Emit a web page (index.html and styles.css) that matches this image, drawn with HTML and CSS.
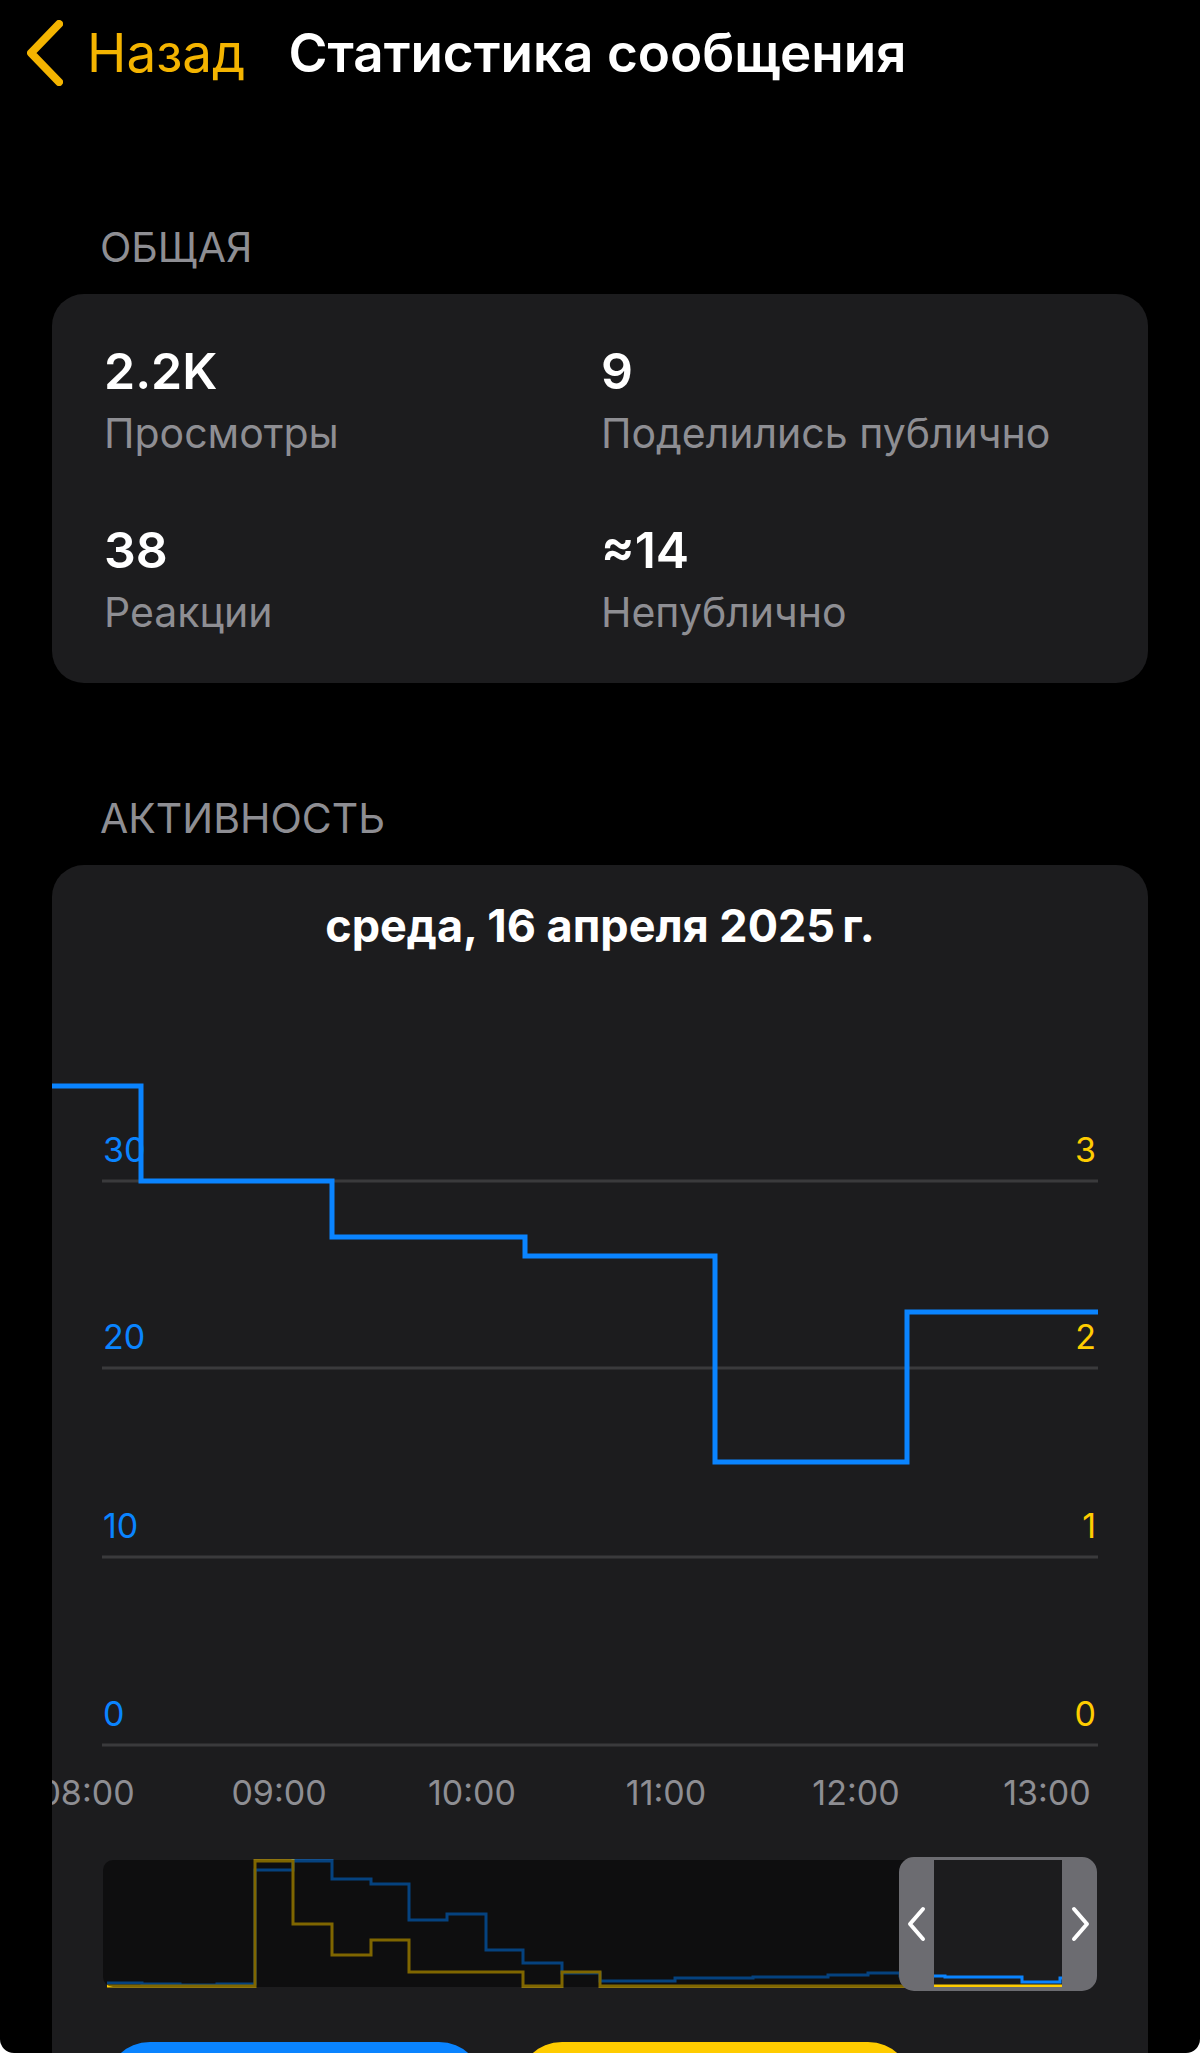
FILE: index.html
```html
<!DOCTYPE html>
<html lang="ru">
  <head>
    <meta charset="UTF-8" />
    <meta name="viewport" content="width=device-width, initial-scale=1.0" />
    <title>Статистика сообщения</title>
    <link rel="stylesheet" href="styles.css">
  </head>
  <body>
    <div class="screen">
      <header class="nav">
        <a class="back" href="#">
          <svg class="back-icon" width="36" height="66" viewBox="0 0 36 66">
            <path d="M32 4 L4 33 L32 62" />
          </svg>
          <span>Назад</span>
        </a>
        <h1 class="nav-title">Статистика сообщения</h1>
      </header>

      <section class="group">
        <h2 class="group-title">ОБЩАЯ</h2>
        <div class="card stats">
          <div class="stat">
            <div class="stat-value">2.2K</div>
            <div class="stat-label">Просмотры</div>
          </div>
          <div class="stat">
            <div class="stat-value">9</div>
            <div class="stat-label">Поделились публично</div>
          </div>
          <div class="stat">
            <div class="stat-value">38</div>
            <div class="stat-label">Реакции</div>
          </div>
          <div class="stat">
            <div class="stat-value">≈14</div>
            <div class="stat-label">Непублично</div>
          </div>
        </div>
      </section>

      <section class="group group-activity">
        <h2 class="group-title">АКТИВНОСТЬ</h2>
        <div class="card chart-card">
          <h3 class="chart-date">среда, 16 апреля 2025&#8239;г.</h3>

          <svg class="chart" width="1096" height="850" viewBox="0 0 1096 850">
            <g class="grid">
              <line x1="50" y1="202" x2="1046" y2="202" />
              <line x1="50" y1="389" x2="1046" y2="389" />
              <line x1="50" y1="578" x2="1046" y2="578" />
              <line x1="50" y1="766" x2="1046" y2="766" />
            </g>
            <g class="axis-left">
              <text x="51" y="183">30</text>
              <text x="51" y="370">20</text>
              <text x="51" y="559">10</text>
              <text x="51" y="747">0</text>
            </g>
            <g class="axis-right">
              <text x="1044" y="183">3</text>
              <text x="1044" y="370">2</text>
              <text x="1044" y="559">1</text>
              <text x="1044" y="747">0</text>
            </g>
            <g class="axis-time">
              <text x="35" y="826">08:00</text>
              <text x="227" y="826">09:00</text>
              <text x="420" y="826">10:00</text>
              <text x="614" y="826">11:00</text>
              <text x="804" y="826">12:00</text>
              <text x="995" y="826">13:00</text>
            </g>
            <path class="series-views" d="M-10 107 H89 V202 H280 V258 H473 V277 H663 V483 H855 V333 H1046" />
          </svg>

          <svg class="minimap" width="994" height="134" viewBox="0 0 994 134">
            <path class="mini-views" d="M4 126 H39 V127 H77 V128 H114 V127 H152 V13 H190 V4 H229 V22 H268 V27 H306 V63 H344 V57 H383 V93 H420 V106 H459 V116 H497 V124 H572 V121 H650 V120 H725 V118 H765 V116 H797 V119 H842 V120 H919 V125 H957 V121 H959" />
            <path class="mini-shares" d="M4 129 H152 V4 H190 V67 H229 V98 H268 V83 H306 V115 H420 V129 H459 V115 H497 V129 H959" />
            <rect class="mini-shade" x="0" y="3" width="831" height="127" rx="10" />
            <path class="mini-window" fill-rule="evenodd"
              d="M811 0 H979 A15 15 0 0 1 994 15 V119 A15 15 0 0 1 979 134 H811 A15 15 0 0 1 796 119 V15 A15 15 0 0 1 811 0 Z
                 M831 3 V130 H959 V3 Z" />
            <path class="mini-handle" d="M820 52 L807 67 L820 82" />
            <path class="mini-handle" d="M971 52 L984 67 L971 82" />
          </svg>

          <div class="legend">
            <button class="legend-btn legend-views" aria-label="Просмотры"></button>
            <button class="legend-btn legend-shares" aria-label="Поделились"></button>
          </div>
        </div>
      </section>
    </div>
  </body>
</html>
```

FILE: styles.css
```css
* {
  box-sizing: border-box;
}
html,
body {
  margin: 0;
  background: #fff;
}
body {
  font-family: Inter, "Noto Sans", sans-serif;
  color: #fff;
}
.screen {
  width: 1200px;
  height: 2053px;
  overflow: hidden;
  background: #000;
  border-radius: 0 0 14px 14px;
}

/* nav bar */
.nav {
  display: flex;
  align-items: center;
  padding: 21px 0 0 27px;
  height: 85px;
}
.back {
  display: flex;
  align-items: center;
  color: #f4b400;
  text-decoration: none;
  font-size: 53px;
  line-height: 64px;
}
.back-icon {
  display: block;
  margin-right: 24px;
}
.back-icon path {
  fill: none;
  stroke: #f4b400;
  stroke-width: 8;
  stroke-linecap: round;
  stroke-linejoin: round;
}
.nav-title {
  margin: 0 0 0 43px;
  font-size: 53px;
  line-height: 64px;
  font-weight: 600;
}

/* groups */
.group {
  padding: 0 52px;
  margin-top: 137px;
}
.group-activity {
  margin-top: 110px;
}
.group-title {
  margin: 0 0 22px 48px;
  font-size: 41px;
  line-height: 50px;
  font-weight: 400;
  color: #8e8e93;
}
.card {
  background: #1c1c1e;
  border-radius: 32px;
  overflow: hidden;
}

/* general stats */
.stats {
  display: grid;
  grid-template-columns: 497px 1fr;
  row-gap: 62px;
  padding: 47px 0 46px 52px;
}
.stat-value {
  font-size: 50px;
  line-height: 60px;
  font-weight: 600;
}
.stat-label {
  margin-top: 7px;
  font-size: 41px;
  line-height: 50px;
  color: #8e8e93;
}

/* activity chart */
.chart-card {
  padding-top: 34px;
  height: 1300px;
}
.chart-date {
  margin: 0;
  text-align: center;
  font-size: 45px;
  line-height: 54px;
  font-weight: 700;
}
.chart {
  display: block;
  margin-top: 26px;
}
.grid line {
  stroke: #3a3a3c;
  stroke-width: 3;
}
.chart text {
  font-family: Inter, "Noto Sans", sans-serif;
  font-size: 34px;
}
.axis-left text {
  fill: #0a84ff;
}
.axis-right text {
  fill: #ffcc00;
  text-anchor: end;
}
.axis-time text {
  fill: #8e8e93;
  text-anchor: middle;
}
.series-views {
  fill: none;
  stroke: #0a84ff;
  stroke-width: 5;
}

/* minimap */
.minimap {
  display: block;
  margin: 28px 0 0 51px;
}
.mini-views,
.mini-shares {
  fill: none;
  stroke-width: 3;
}
.mini-views {
  stroke: #0a84ff;
}
.mini-shares {
  stroke: #ffcc00;
}
.mini-shade {
  fill: rgba(0, 0, 0, 0.5);
}
.mini-window {
  fill: #6c6c71;
}
.mini-handle {
  fill: none;
  stroke: #fff;
  stroke-width: 4;
  stroke-linecap: round;
  stroke-linejoin: round;
}

/* legend */
.legend {
  display: flex;
  gap: 35px;
  margin: 51px 0 0 54px;
}
.legend-btn {
  height: 88px;
  border: 0;
  border-radius: 44px;
}
.legend-views {
  width: 377px;
  background: #0a84ff;
}
.legend-shares {
  width: 394px;
  background: #ffcc00;
}
```
